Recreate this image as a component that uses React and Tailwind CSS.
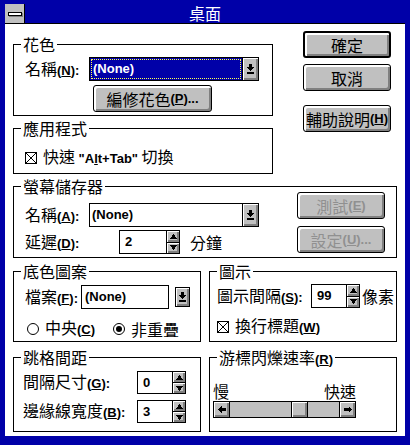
import React from "react";

const bevel = "bg-[#c0c0c0] shadow-[inset_1px_1px_0_#fff,inset_-1px_-1px_0_#808080,inset_-2px_-2px_0_#808080]";

const B = ({ children }) => (
  <span className="font-['Liberation_Sans',sans-serif] font-bold text-[13px]">{children}</span>
);

const Group = ({ title, className, children }) => (
  <div className={`border border-black flex flex-col ${className}`}>
    <div className="-mt-[9px] ml-[7px] px-[2px] bg-white w-fit leading-[16px] whitespace-nowrap">{title}</div>
    {children}
  </div>
);

const Btn = ({ children, def, disabled, className }) => (
  <div
    className={`h-[27px] rounded-[3px] flex items-center justify-center border-black bg-[#c0c0c0] shadow-[inset_2px_2px_0_#fff,inset_-2px_-2px_0_#808080] ${def ? "border-2" : "border"} ${disabled ? "text-[#909090]" : "text-black"} ${className}`}
  >
    {children}
  </div>
);

const DownIcon = () => (
  <svg width="9" height="10" viewBox="0 0 9 10" shapeRendering="crispEdges">
    <path d="M3 0h3v3h2.5L4.5 7 0.5 3H3z" fill="#000" />
    <rect x="1" y="8" width="7" height="2" fill="#000" />
  </svg>
);

const DropBtn = ({ className }) => (
  <div className={`border border-black flex items-center justify-center ${bevel} ${className}`}>
    <DownIcon />
  </div>
);

const Dropdown = ({ selected }) => (
  <div className="flex h-[24px]">
    <div className={`w-[154px] border border-black ${selected ? "bg-[#0000a8] p-[1px]" : "bg-white"}`}>
      {selected ? (
        <div className="h-full border border-dotted border-[#ffff55] flex items-center pl-[1px] text-white">
          <B>(None)</B>
        </div>
      ) : (
        <div className="h-full flex items-center pl-[2px]">
          <B>(None)</B>
        </div>
      )}
    </div>
    <DropBtn className="w-[17px] -ml-px" />
  </div>
);

const Tri = ({ up }) => (
  <svg width="7" height="5" viewBox="0 0 7 5" shapeRendering="crispEdges">
    <polygon points={up ? "0,5 3.5,0 7,5" : "0,0 7,0 3.5,5"} fill="#000" />
  </svg>
);

const Spin = ({ value, fieldW, h }) => (
  <div className={`flex ${h}`}>
    <div className={`border border-black bg-white flex items-center pl-[5px] ${fieldW}`}>
      <B>{value}</B>
    </div>
    <div className="w-[14px] -ml-px border border-black flex flex-col">
      <div className={`flex-1 flex items-center justify-center border-b border-black ${bevel}`}>
        <Tri up />
      </div>
      <div className={`flex-1 flex items-center justify-center ${bevel}`}>
        <Tri />
      </div>
    </div>
  </div>
);

const Check = () => (
  <svg width="12" height="12" viewBox="0 0 12 12" shapeRendering="crispEdges" className="shrink-0">
    <rect x="0.5" y="0.5" width="11" height="11" fill="#fff" stroke="#000" />
    <path d="M1 1L11 11M11 1L1 11" stroke="#000" strokeWidth="1" />
  </svg>
);

const Radio = ({ on }) => (
  <div className="w-[12px] h-[12px] rounded-full border border-black bg-white flex items-center justify-center shrink-0">
    {on && <div className="w-[6px] h-[6px] rounded-full bg-black" />}
  </div>
);

const Arrow = ({ right }) => (
  <svg width="8" height="7" viewBox="0 0 8 7" shapeRendering="crispEdges" className={right ? "scale-x-[-1]" : ""}>
    <path d="M0 3.5L3.5 0V2H8V5H3.5V7Z" fill="#000" />
  </svg>
);

export default function App() {
  return (
    <div className="w-[410px] h-[445px] bg-[#0000a8] pt-[4px] px-[5px] pb-[9px] flex flex-col text-black text-[16px] leading-[16px] font-['Noto_Sans_CJK_TC','Liberation_Sans',sans-serif]">
      {/* title bar */}
      <div className="h-[20px] flex border-b border-black shrink-0">
        <div className="w-[20px] bg-[#c0c0c0] border-r border-black flex items-center justify-center">
          <div className="w-[14px] h-[4px] bg-white border border-black shadow-[1px_1px_0_#808080]" />
        </div>
        <div className="flex-1 text-center text-white leading-[19px] pr-[20px]">桌面</div>
      </div>

      {/* body */}
      <div className="flex-1 bg-white px-[8px] pt-[7px] flex flex-col">
        <div className="flex items-start">
          <div className="w-[260px] mt-[13px] flex flex-col">
            <Group title="花色" className="h-[72px]">
              <div className="mt-[5px] pl-[11px] flex items-center">
                <div className="w-[64px] whitespace-nowrap">
                  名稱<B>(<u>N</u>):</B>
                </div>
                <Dropdown selected />
              </div>
              <Btn className="mt-[4px] ml-[79px] w-[119px]">
                編修花色<B>(<u>P</u>)...</B>
              </Btn>
            </Group>
            <Group title="應用程式" className="h-[46px] mt-[12px]">
              <div className="mt-[12px] pl-[11px] flex items-center gap-[6px] whitespace-nowrap">
                <Check />
                <span>
                  快速 <B>"A<u>l</u>t+Tab"</B> 切換
                </span>
              </div>
            </Group>
          </div>
          <div className="ml-[30px] w-[88px] flex flex-col">
            <Btn def>確定</Btn>
            <Btn className="mt-[6px]">取消</Btn>
            <Btn className="mt-[14px]">
              輔助說明<B>(<u>H</u>)</B>
            </Btn>
          </div>
        </div>

        <Group title="螢幕儲存器" className="h-[72px] mt-[12px]">
          <div className="flex">
            <div className="pl-[11px] pt-[9px] flex flex-col">
              <div className="flex items-center">
                <div className="w-[64px] whitespace-nowrap">
                  名稱<B>(<u>A</u>):</B>
                </div>
                <Dropdown />
              </div>
              <div className="flex items-center mt-[3px]">
                <div className="w-[94px] whitespace-nowrap">
                  延遲<B>(<u>D</u>):</B>
                </div>
                <Spin value="2" fieldW="w-[48px]" h="h-[24px]" />
                <span className="ml-[10px]">分鐘</span>
              </div>
            </div>
            <div className="ml-auto mr-[11px] -mt-[2px] w-[88px] flex flex-col">
              <Btn disabled>
                測試<B>(<u>E</u>)</B>
              </Btn>
              <Btn disabled className="mt-[7px]">
                設定<B>(<u>U</u>)...</B>
              </Btn>
            </div>
          </div>
        </Group>

        <div className="flex mt-[13px] gap-[8px]">
          <Group title="底色圖案" className="w-[188px] h-[71px]">
            <div className="mt-[6px] pl-[11px] flex items-center">
              <div className="w-[56px] whitespace-nowrap">
                檔案<B>(<u>F</u>):</B>
              </div>
              <div className="w-[88px] h-[24px] border border-black flex items-center pl-[3px]">
                <B>(None)</B>
              </div>
              <DropBtn className="ml-[6px] w-[15px] h-[20px]" />
            </div>
            <div className="mt-[10px] pl-[13px] flex items-center whitespace-nowrap">
              <div className="w-[86px] flex items-center gap-[6px]">
                <Radio />
                <span>
                  中央<B>(<u>C</u>)</B>
                </span>
              </div>
              <div className="flex items-center gap-[6px]">
                <Radio on />
                <span>非重疊</span>
              </div>
            </div>
          </Group>
          <Group title="圖示" className="w-[188px] h-[71px]">
            <div className="mt-[5px] pl-[7px] flex items-center">
              <div className="w-[94px] whitespace-nowrap">
                圖示間隔<B>(<u>S</u>):</B>
              </div>
              <Spin value="99" fieldW="w-[36px]" h="h-[24px]" />
              <span className="ml-[2px]">像素</span>
            </div>
            <div className="mt-[9px] pl-[7px] flex items-center gap-[6px] whitespace-nowrap">
              <Check />
              <span>
                換行標題<B>(<u>W</u>)</B>
              </span>
            </div>
          </Group>
        </div>

        <div className="flex mt-[15px] gap-[8px]">
          <Group title="跳格間距" className="w-[188px] h-[75px]">
            <div className="mt-[6px] pl-[9px] flex items-center">
              <div className="w-[114px] whitespace-nowrap">
                間隔尺寸<B>(<u>G</u>):</B>
              </div>
              <Spin value="0" fieldW="w-[36px]" h="h-[23px]" />
            </div>
            <div className="mt-[6px] pl-[9px] flex items-center">
              <div className="w-[114px] whitespace-nowrap">
                邊緣線寬度<B>(<u>B</u>):</B>
              </div>
              <Spin value="3" fieldW="w-[36px]" h="h-[23px]" />
            </div>
          </Group>
          <Group
            title={
              <>
                游標閃爍速率<B>(<u>R</u>)</B>
              </>
            }
            className="w-[188px] h-[75px]"
          >
            <div className="pl-[3px] mt-[15px] w-[146px] flex justify-between">
              <span>慢</span>
              <span>快速</span>
            </div>
            <div className="ml-[3px] mt-[2px] w-[143px] h-[17px] border border-black flex">
              <div className={`w-[16px] border-r border-black flex items-center justify-center ${bevel}`}>
                <Arrow />
              </div>
              <div className="flex-1 bg-[#c0c0c0] flex">
                <div className="w-[61px]" />
                <div className={`w-[17px] border-x border-black ${bevel}`} />
              </div>
              <div className={`w-[16px] border-l border-black flex items-center justify-center ${bevel}`}>
                <Arrow right />
              </div>
            </div>
          </Group>
        </div>
      </div>
    </div>
  );
}
